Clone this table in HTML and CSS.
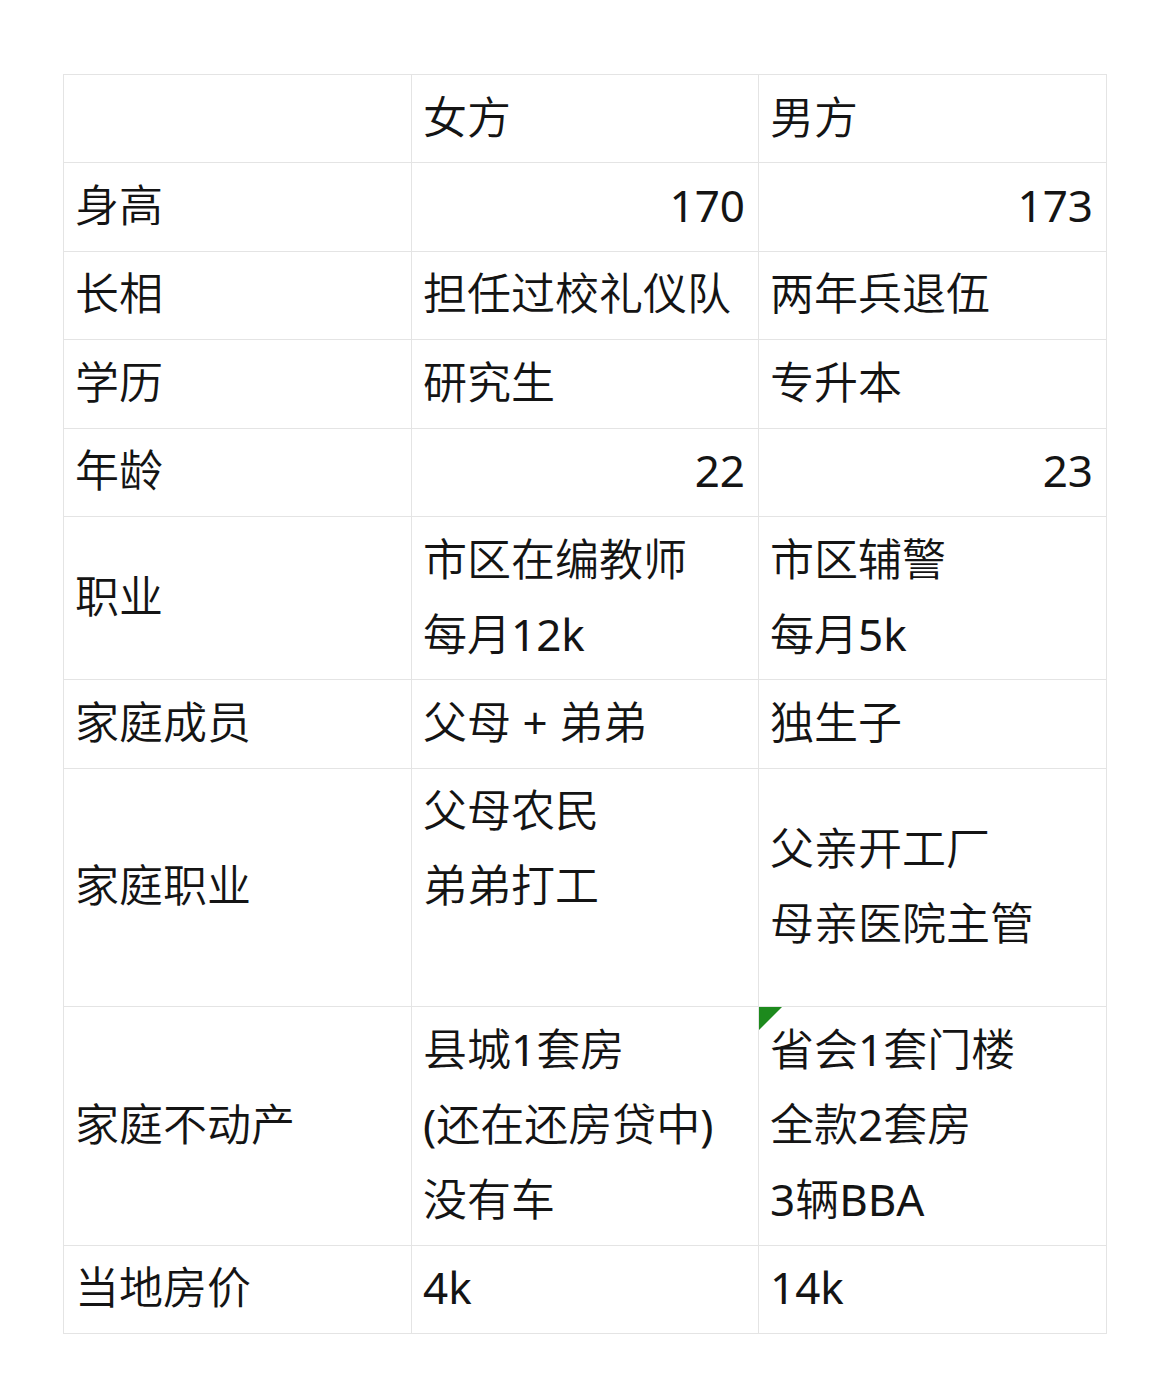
FILE: index.html
```html
<!DOCTYPE html>
<html lang="zh-CN">
<head>
<meta charset="utf-8">
<link rel="stylesheet" href="styles.css">
</head>
<body>
<table class="sheet">
  <colgroup><col class="c1"><col class="c2"><col class="c3"></colgroup>
  <tr><td></td><td>女方</td><td>男方</td></tr>
  <tr><td>身高</td><td class="num"><span class="lat">170</span></td><td class="num"><span class="lat">173</span></td></tr>
  <tr><td>长相</td><td>担任过校礼仪队</td><td>两年兵退伍</td></tr>
  <tr><td>学历</td><td>研究生</td><td>专升本</td></tr>
  <tr><td>年龄</td><td class="num"><span class="lat">22</span></td><td class="num"><span class="lat">23</span></td></tr>
  <tr><td>职业</td><td>市区在编教师<br>每月<span class="lat">12k</span></td><td>市区辅警<br>每月<span class="lat">5k</span></td></tr>
  <tr><td>家庭成员</td><td>父母 <span class="lat">+</span> 弟弟</td><td>独生子</td></tr>
  <tr><td>家庭职业</td><td class="top">父母农民<br>弟弟打工<br>&nbsp;</td><td>父亲开工厂<br>母亲医院主管</td></tr>
  <tr><td>家庭不动产</td><td>县城<span class="lat">1</span>套房<br><span class="lat">(</span>还在还房贷中<span class="lat">)</span><br>没有车</td><td class="marked"><span class="flag"></span>省会<span class="lat">1</span>套门楼<br>全款<span class="lat">2</span>套房<br><span class="lat">3</span>辆<span class="lat">BBA</span></td></tr>
  <tr><td>当地房价</td><td><span class="lat">4k</span></td><td><span class="lat">14k</span></td></tr>
</table>
</body>
</html>
```
FILE: styles.css
```css
html, body {
  margin: 0;
  padding: 0;
  background: #ffffff;
}
body {
  padding: 74px 0 0 63px;
  font-family: "Noto Sans", "Noto Sans CJK SC", sans-serif;
  color: #141414;
}
.sheet {
  border-collapse: collapse;
  table-layout: fixed;
  width: 1044px;
}
.c1 { width: 348px; }
.c2 { width: 347px; }
.c3 { width: 348px; }
.sheet td {
  border: 1px solid #e4e4e4;
  padding: 4.6px 13px 7.8px 11px;
  font-size: 44px;
  font-weight: 350;
  line-height: 75px;
  vertical-align: middle;
  white-space: nowrap;
  overflow: hidden;
}
.lat {
  font-weight: 400;
}
.sheet td.num {
  text-align: right;
}
.sheet td.top {
  vertical-align: top;
}
.sheet td.marked {
  position: relative;
}
.flag {
  position: absolute;
  left: 0;
  top: 0;
  width: 0;
  height: 0;
  border-top: 23px solid #1d8a1d;
  border-right: 23px solid transparent;
}
```
